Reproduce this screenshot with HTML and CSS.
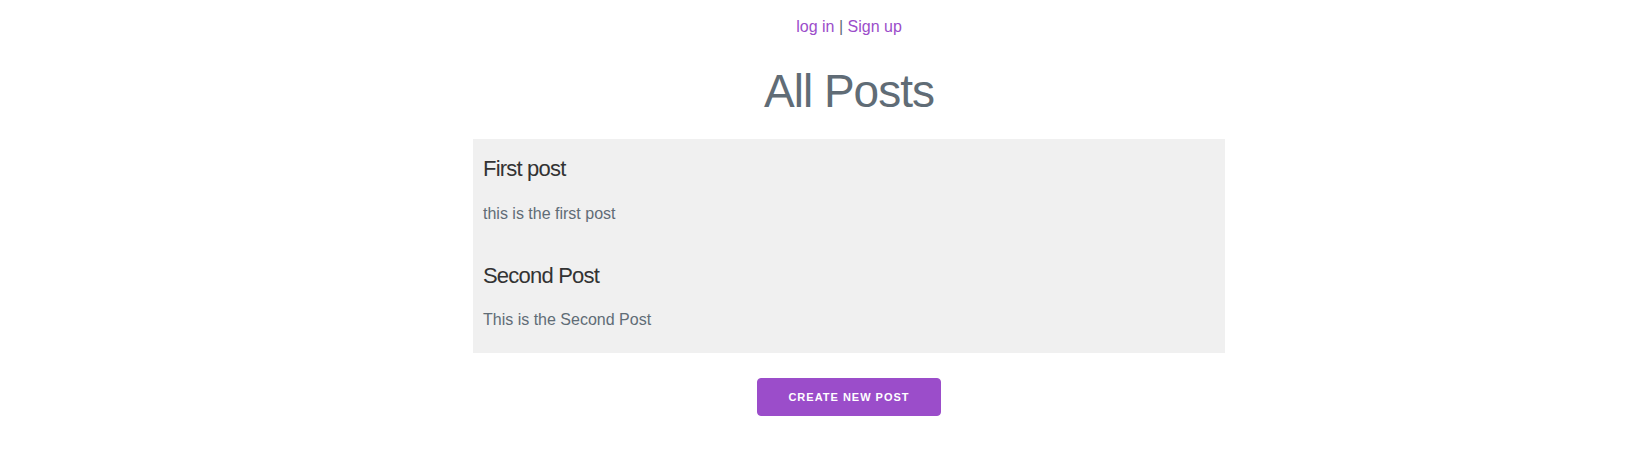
FILE: index.html
```html
<!DOCTYPE html>
<html lang="en">
<head>
<meta charset="utf-8">
<title>All Posts</title>
<link rel="stylesheet" href="styles.css">
</head>
<body>
<div class="page">
  <nav class="auth">
    <a href="#">log in</a> | <a href="#">Sign up</a>
  </nav>
  <h1 class="title">All Posts</h1>
  <section class="posts">
    <article class="post">
      <h4 class="post-title">First post</h4>
      <p class="post-body">this is the first post</p>
    </article>
    <article class="post">
      <h4 class="post-title">Second Post</h4>
      <p class="post-body">This is the Second Post</p>
    </article>
  </section>
  <a class="button" href="#">Create new post</a>
</div>
</body>
</html>
```

FILE: styles.css
```css
* { box-sizing: border-box; }

html, body {
  margin: 0;
  padding: 0;
  background: #ffffff;
}

body {
  font-family: "Liberation Sans", Arial, sans-serif;
  font-size: 16px;
  line-height: 1.6;
  color: #606c76;
}

.page {
  display: flex;
  flex-direction: column;
  align-items: center;
  padding: 14px 0 0 50px;
}

.auth {
  line-height: 25.6px;
  color: #606c76;
}

.auth a {
  color: #9b4dca;
  text-decoration: none;
}

.title {
  margin: 24px 0 20px;
  font-size: 46px;
  line-height: 55.2px;
  font-weight: 300;
  letter-spacing: -1px;
  color: #606c76;
}

.posts {
  width: 752px;
  background: #f0f0f0;
  padding: 15px 10px 20px;
  display: flex;
  flex-direction: column;
  gap: 34.5px;
}

.post-title {
  margin: 0 0 17px;
  font-size: 22px;
  line-height: 29.7px;
  font-weight: 300;
  letter-spacing: -0.8px;
  color: #333333;
}

.post-body {
  margin: 0;
  line-height: 25.6px;
  color: #606c76;
}

.button {
  margin-top: 25.5px;
  display: inline-block;
  height: 38px;
  padding: 0 30px;
  background: #9b4dca;
  border: 1px solid #9b4dca;
  border-radius: 4px;
  color: #ffffff;
  font-size: 11px;
  font-weight: 700;
  letter-spacing: 1px;
  line-height: 36px;
  text-transform: uppercase;
  text-decoration: none;
  white-space: nowrap;
}
```
